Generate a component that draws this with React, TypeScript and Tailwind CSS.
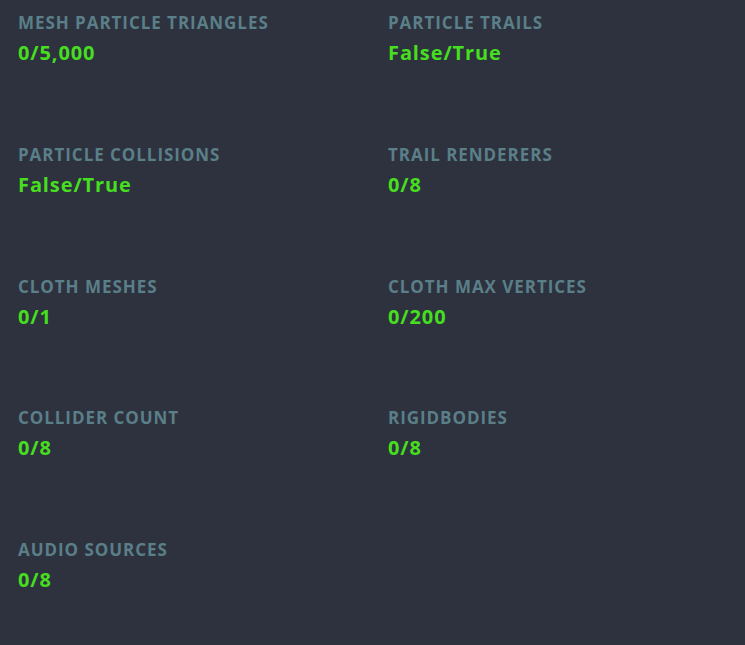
const stats = [
  { label: "Mesh Particle Triangles", value: "0/5,000" },
  { label: "Particle Trails", value: "False/True" },
  { label: "Particle Collisions", value: "False/True" },
  { label: "Trail Renderers", value: "0/8" },
  { label: "Cloth Meshes", value: "0/1" },
  { label: "Cloth Max Vertices", value: "0/200" },
  { label: "Collider Count", value: "0/8" },
  { label: "Rigidbodies", value: "0/8" },
  { label: "Audio Sources", value: "0/8" },
];

export default function App() {
  return (
    <div className="min-h-screen w-full bg-[#2e323e] pl-[18px] pt-[10px] font-['Open_Sans','Noto_Sans',sans-serif]">
      <div className="grid grid-cols-[370px_370px]">
        {stats.map((s) => (
          <div key={s.label} className="h-[131.75px]">
            <div className="text-[17px] leading-[25px] font-bold uppercase tracking-[0.95px] text-[#5a7f88]">
              {s.label}
            </div>
            <div className="mt-[5px] text-[20px] leading-[26px] font-bold tracking-[0.9px] text-[#46de1e]">
              {s.value}
            </div>
          </div>
        ))}
      </div>
    </div>
  );
}
